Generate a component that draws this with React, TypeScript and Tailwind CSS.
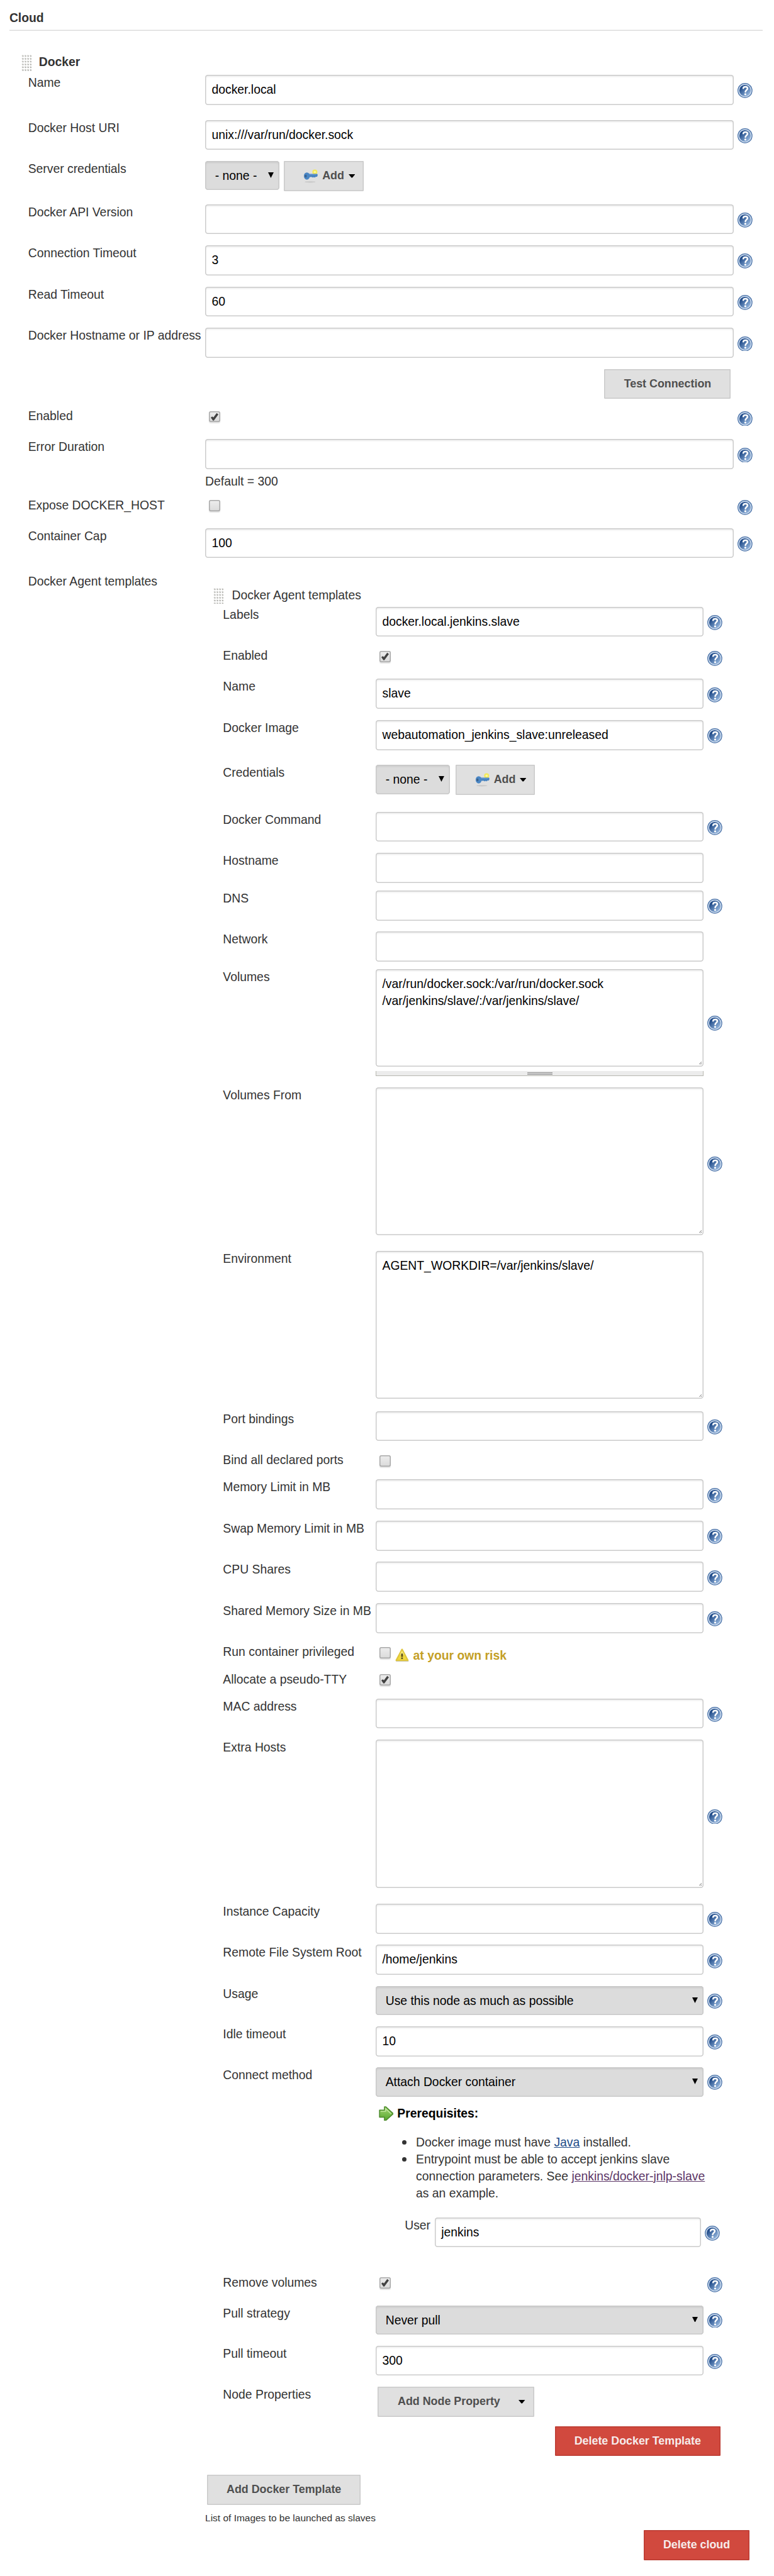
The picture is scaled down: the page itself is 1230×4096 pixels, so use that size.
import type { ReactNode } from "react";

const FIELD =
  "bg-white rounded-[3px] shadow-[inset_0_0_0_1px_#cbcbcb,inset_0_2px_2px_rgba(0,0,0,0.08)] px-[7px] text-black";
const BUTTON =
  "flex items-center h-8 shrink-0 rounded-[1px] bg-[#e0e0e0] shadow-[inset_0_0_0_1px_#cacaca] text-[12px] font-bold leading-8 text-[#4f4f4f] whitespace-nowrap";
const DANGER =
  "flex items-center justify-center h-8 shrink-0 rounded-[1px] bg-[#d1493e] shadow-[inset_0_0_0_1px_#bb3c33] text-[12px] font-bold leading-8 text-[#f6eceb] whitespace-nowrap";

function HelpIcon({ top = "mt-[9px]" }: { top?: string }) {
  return (
    <svg className={`ml-1 size-4 shrink-0 ${top}`} viewBox="0 0 32 32">
      <defs>
        <linearGradient id="help" x1="0.1" y1="0.1" x2="0.9" y2="0.9">
          <stop offset="0.15" stopColor="#1f4a88" />
          <stop offset="0.9" stopColor="#8fb1da" />
        </linearGradient>
      </defs>
      <circle cx="16" cy="16" r="15.9" fill="#466fa6" />
      <circle cx="16" cy="16" r="13.2" fill="url(#help)" stroke="#c6d6ea" strokeWidth="2.2" />
      <path
        d="M12.3 11.2c.6-4 8.9-4.300 9.100.3.1 3.600-4.500 4-4.500 7.400"
        fill="none"
        stroke="#fff"
        strokeWidth="3.4"
        strokeLinecap="round"
      />
      <circle cx="16.7" cy="24" r="2.2" fill="#fff" />
    </svg>
  );
}

function DragHandle() {
  const cols = [0, 1, 2, 3];
  const rows = [0, 1, 2, 3, 4, 5];
  return (
    <svg className="h-[18px] w-[11px] shrink-0" viewBox="0 0 22 36">
      {rows.map((r) =>
        cols.map((c) => (
          <g key={`${r}-${c}`}>
            <rect x={c * 5.6 + 0.8} y={r * 6 + 1.8} width="3.8" height="3.8" rx="1.500" fill="#dfdfdd" />
            <rect x={c * 5.6 + 2} y={r * 6 + 3} width="2.8" height="2.8" rx="1" fill="#b3b3af" />
          </g>
        ))
      )}
    </svg>
  );
}

function Checkbox({ checked = false }: { checked?: boolean }) {
  return (
    <span className="ml-1 mt-[3px] size-3 shrink-0 rounded-[2px] bg-linear-to-b from-[#eeeeee] to-[#dadada] shadow-[inset_0_0_0_1px_#a8a8a8,0_1px_1px_rgba(0,0,0,0.12)]">
      {checked && (
        <svg className="size-3" viewBox="0 0 24 24">
          <path d="M4 13.500 7 11l2.600 2 7-9.200 3.600 2.900L10.500 19.700 8.500 19.700Z" fill="#424242" />
        </svg>
      )}
    </span>
  );
}

function Caret() {
  return (
    <svg className="h-[4px] w-[7px] shrink-0" viewBox="0 0 14 8">
      <path d="M0 0h14L8 7.500H6Z" fill="#000" />
    </svg>
  );
}

function Select({ value, width }: { value: string; width: string }) {
  return (
    <div
      className={`flex h-[31px] shrink-0 justify-between rounded-[3px] bg-[#dcdcdc] pl-[10.5px] pr-[6px] leading-[31px] text-black shadow-[inset_0_0_0_1px_#c9c9c9,inset_0_2px_2px_rgba(0,0,0,0.08)] ${width}`}
    >
      <span>{value}</span>
      <svg className="mt-3 size-[6px]" viewBox="0 0 12 12">
        <path d="M0 0h12L6 12Z" fill="#000" />
      </svg>
    </div>
  );
}

function KeyIcon() {
  return (
    <svg className="size-4 shrink-0" viewBox="0 0 32 32">
      <ellipse cx="14.500" cy="28.600" rx="11.500" ry="1.500" fill="#c8c8c8" />
      <circle cx="24.600" cy="7.500" r="5.400" fill="#f3e95c" />
      <circle cx="24.600" cy="7.500" r="2.400" fill="#fbf7a0" />
      <path d="M12 11.500h17.500c1.500 0 1.500 5.500-.5 6l-3 .3-1.500 1.800-2-1.500-2 1.500-2-1.500H12Z" fill="#4682c0" />
      <ellipse cx="7.600" cy="16" rx="6.400" ry="7.700" fill="#4a86c4" />
      <path d="M13 13.200h15" stroke="#6a9dd4" strokeWidth="1.400" />
      <ellipse cx="5.200" cy="16" rx="2" ry="3" fill="#3a5f87" />
    </svg>
  );
}

function Credentials({ gap }: { gap: string }) {
  return (
    <div className={`flex ${gap}`}>
      <Select value="- none -" width="w-[79px]" />
      <div className={`${BUTTON} w-[85px] pl-[21px]`}>
        <KeyIcon />
        <span className="ml-[4px] mr-[4.5px]">Add</span>
        <Caret />
      </div>
    </div>
  );
}

type RowProps = {
  label: string;
  inner?: boolean;
  height?: string;
  help?: boolean;
  helpTop?: string;
  children?: ReactNode;
};

function Row({ label, inner = false, height = "h-11", help = true, helpTop, children }: RowProps) {
  return (
    <div className={`flex items-start ${height}`}>
      <div className={`shrink-0 whitespace-nowrap leading-[17px] ${inner ? "w-[163px]" : "w-[189px]"}`}>{label}</div>
      <div className={`flex shrink-0 items-start ${inner ? "w-[350px]" : "w-[564px]"}`}>{children}</div>
      {help && <HelpIcon top={helpTop} />}
    </div>
  );
}

function TextRow({ value = "", ...row }: RowProps & { value?: string }) {
  return (
    <Row {...row}>
      <div className={`${FIELD} h-8 w-full leading-8`}>{value}</div>
    </Row>
  );
}

function CheckRow({ checked, children, ...row }: RowProps & { checked?: boolean }) {
  return (
    <Row helpTop="mt-[3px]" {...row}>
      <Checkbox checked={checked} />
      {children}
    </Row>
  );
}

function SelectRow({ value, ...row }: RowProps & { value: string }) {
  return (
    <Row helpTop="mt-2" {...row}>
      <Select value={value} width="w-full" />
    </Row>
  );
}

function TextArea({ height, lines = [] }: { height: string; lines?: string[] }) {
  return (
    <div className={`${FIELD} flex w-full justify-between pr-[2px] pt-[6.7px] leading-[18px] ${height}`}>
      <div>
        {lines.map((line) => (
          <div key={line}>{line}</div>
        ))}
      </div>
      <svg className="mb-[2px] size-[3px] self-end" viewBox="0 0 6 6">
        <path d="M0 6 6 0M3.500 6 6 3.500" stroke="#555" strokeWidth="1.200" />
      </svg>
    </div>
  );
}

function WarningIcon() {
  return (
    <svg className="ml-1 mt-[3.5px] size-4 shrink-0" viewBox="0 0 32 32">
      <path d="M4 28.500h25" stroke="#cfcfcf" strokeWidth="2.500" strokeLinecap="round" />
      <path
        d="M16 3.500 28.500 27H3.500Z"
        fill="#f0d840"
        stroke="#dfc53c"
        strokeWidth="3"
        strokeLinejoin="round"
      />
      <path d="M16 6 21 15H11Z" fill="#f7e878" />
      <rect x="14.200" y="12.500" width="3.600" height="7" fill="#544a20" />
      <rect x="14.200" y="21" width="3.600" height="3" fill="#544a20" />
    </svg>
  );
}

function ArrowIcon() {
  return (
    <svg className="size-4 shrink-0" viewBox="0 0 32 32">
      <defs>
        <linearGradient id="arrow" x1="0" y1="0" x2="0" y2="1">
          <stop offset="0" stopColor="#a3d672" />
          <stop offset="1" stopColor="#55a52c" />
        </linearGradient>
      </defs>
      <path
        d="M1.500 8.500h10.500V1.500h3L31 16 15 30.500h-3V23.500H1.500Z"
        fill="url(#arrow)"
        stroke="#4b8a2b"
        strokeWidth="2"
        strokeLinejoin="round"
      />
      <path d="M4 11h10.500V5.500L26 16" fill="none" stroke="#c4e8a2" strokeWidth="1.800" />
    </svg>
  );
}

function Prerequisites() {
  return (
    <div className="h-[180px] pl-[163px]">
      <div className="flex pl-[3px]">
        <ArrowIcon />
        <span className="ml-1 font-bold leading-4 text-black">Prerequisites:</span>
      </div>
      <ul className="mt-[14px] pl-[28px] leading-[18px]">
        <li className="flex">
          <span className="mr-[10px] mt-[6.5px] size-[5px] shrink-0 rounded-full bg-[#333]" />
          <span className="whitespace-nowrap">
            Docker image must have <a className="text-[#204a87] underline">Java</a> installed.
          </span>
        </li>
        <li className="flex">
          <span className="mr-[10px] mt-[6.5px] size-[5px] shrink-0 rounded-full bg-[#333]" />
          <span className="whitespace-nowrap">
            Entrypoint must be able to accept jenkins slave
            <br />
            connection parameters. See <a className="text-[#5c3566] underline">jenkins/docker-jnlp-slave</a>
            <br />
            as an example.
          </span>
        </li>
      </ul>
      <div className="mt-[17px] flex items-start pl-[31px]">
        <span className="w-8 leading-[17px]">User</span>
        <div className={`${FIELD} h-8 w-[284px] leading-8`}>jenkins</div>
        <HelpIcon />
      </div>
    </div>
  );
}

function AgentTemplate() {
  return (
    <div className="pl-[208px]">
      <div className="-ml-[10px] flex h-[21px] items-start">
        <DragHandle />
        <span className="ml-[8.5px] leading-[17px]">Docker Agent templates</span>
      </div>
      <TextRow inner label="Labels" value="docker.local.jenkins.slave" />
      <CheckRow inner label="Enabled" checked height="h-[33px]" />
      <TextRow inner label="Name" value="slave" />
      <TextRow inner label="Docker Image" value="webautomation_jenkins_slave:unreleased" height="h-12" />
      <Row inner label="Credentials" help={false} height="h-[50px]">
        <Credentials gap="gap-[6px]" />
      </Row>
      <TextRow inner label="Docker Command" />
      <TextRow inner label="Hostname" help={false} height="h-10" />
      <TextRow inner label="DNS" />
      <TextRow inner label="Network" help={false} height="h-10" />
      <Row inner label="Volumes" height="h-[126px]" helpTop="mt-[50px]">
        <div className="w-full">
          <TextArea
            height="h-[104px]"
            lines={["/var/run/docker.sock:/var/run/docker.sock", "/var/jenkins/slave/:/var/jenkins/slave/"]}
          />
          <div className="mt-[5px] flex h-[5px] justify-center border-x border-b border-[#b8b8b0] bg-[#ececec]">
            <div className="mt-px h-[3px] w-[27px] border-y border-[#999] bg-[#c8c8c8]" />
          </div>
        </div>
      </Row>
      <Row inner label="Volumes From" height="h-[175px]" helpTop="mt-[74px]">
        <TextArea height="h-[158px]" />
      </Row>
      <Row inner label="Environment" height="h-[171px]" help={false}>
        <TextArea height="h-[158px]" lines={["AGENT_WORKDIR=/var/jenkins/slave/"]} />
      </Row>
      <TextRow inner label="Port bindings" />
      <CheckRow inner label="Bind all declared ports" help={false} height="h-[29px]" />
      <TextRow inner label="Memory Limit in MB" />
      <TextRow inner label="Swap Memory Limit in MB" />
      <TextRow inner label="CPU Shares" />
      <TextRow inner label="Shared Memory Size in MB" />
      <CheckRow inner label="Run container privileged" help={false} height="h-[29px]">
        <WarningIcon />
        <span className="ml-1 mt-[3.5px] font-bold leading-[17px] text-[#c49f27]">at your own risk</span>
      </CheckRow>
      <CheckRow inner label="Allocate a pseudo-TTY" checked help={false} height="h-[29px]" />
      <TextRow inner label="MAC address" />
      <Row inner label="Extra Hosts" height="h-[175px]" helpTop="mt-[74px]">
        <TextArea height="h-[158px]" />
      </Row>
      <TextRow inner label="Instance Capacity" />
      <TextRow inner label="Remote File System Root" value="/home/jenkins" />
      <SelectRow inner label="Usage" value="Use this node as much as possible" height="h-[43px]" />
      <TextRow inner label="Idle timeout" value="10" />
      <SelectRow inner label="Connect method" value="Attach Docker container" height="h-[41px]" />
      <Prerequisites />
      <CheckRow inner label="Remove volumes" checked height="h-[33px]" />
      <SelectRow inner label="Pull strategy" value="Never pull" height="h-[43px]" />
      <TextRow inner label="Pull timeout" value="300" />
      <Row inner label="Node Properties" help={false} height="h-[42px]">
        <div className={`${BUTTON} ml-[2px] w-[167px] justify-between pl-[21.5px] pr-[9.5px]`}>
          <span>Add Node Property</span>
          <Caret />
        </div>
      </Row>
      <div className="flex h-[52px] items-start justify-end pr-[57px]">
        <div className={`${DANGER} w-[177px]`}>Delete Docker Template</div>
      </div>
    </div>
  );
}

export default function App() {
  return (
    <main className="h-[2750px] w-[826px] overflow-hidden bg-white font-['Liberation_Sans',Arial,sans-serif] text-[13px] text-[#333] [zoom:1.489]">
      <h1 className="ml-[10px] mr-3 h-[33px] pt-[11px] font-bold leading-[17px] shadow-[inset_0_-1px_0_#dcdcdc]">
        Cloud
      </h1>
      <section className="pl-[30px] pt-[25px]">
        <div className="-ml-[7px] flex h-[22px] items-start">
          <DragHandle />
          <h2 className="ml-[7.5px] font-bold leading-[17px]">Docker</h2>
        </div>
        <TextRow label="Name" value="docker.local" height="h-12" />
        <TextRow label="Docker Host URI" value="unix:///var/run/docker.sock" />
        <Row label="Server credentials" help={false} height="h-[46px]">
          <Credentials gap="gap-[5px]" />
        </Row>
        <TextRow label="Docker API Version" />
        <TextRow label="Connection Timeout" value="3" />
        <TextRow label="Read Timeout" value="60" />
        <TextRow label="Docker Hostname or IP address" />
        <div className="flex h-[42px] items-start justify-end pr-[46px]">
          <div className={`${BUTTON} w-[135px] justify-center`}>Test Connection</div>
        </div>
        <CheckRow label="Enabled" checked height="h-[33px]" />
        <Row label="Error Duration" height="h-[62px]">
          <div className="w-full">
            <div className={`${FIELD} h-8`} />
            <div className="mt-[4.5px] leading-[17px]">Default = 300</div>
          </div>
        </Row>
        <CheckRow label="Expose DOCKER_HOST" height="h-[33px]" />
        <TextRow label="Container Cap" value="100" height="h-[48.5px]" />
        <div className="h-[14.5px] leading-[17px]">Docker Agent templates</div>
        <AgentTemplate />
        <div className="pl-[189px]">
          <div className={`${BUTTON} ml-[2px] w-[164px] justify-center`}>Add Docker Template</div>
          <div className="mt-[6.5px] text-[10.4px] leading-4">List of Images to be launched as slaves</div>
        </div>
        <div className="mt-[4.5px] flex justify-end pr-[26px]">
          <div className={`${DANGER} w-[113px]`}>Delete cloud</div>
        </div>
      </section>
    </main>
  );
}
